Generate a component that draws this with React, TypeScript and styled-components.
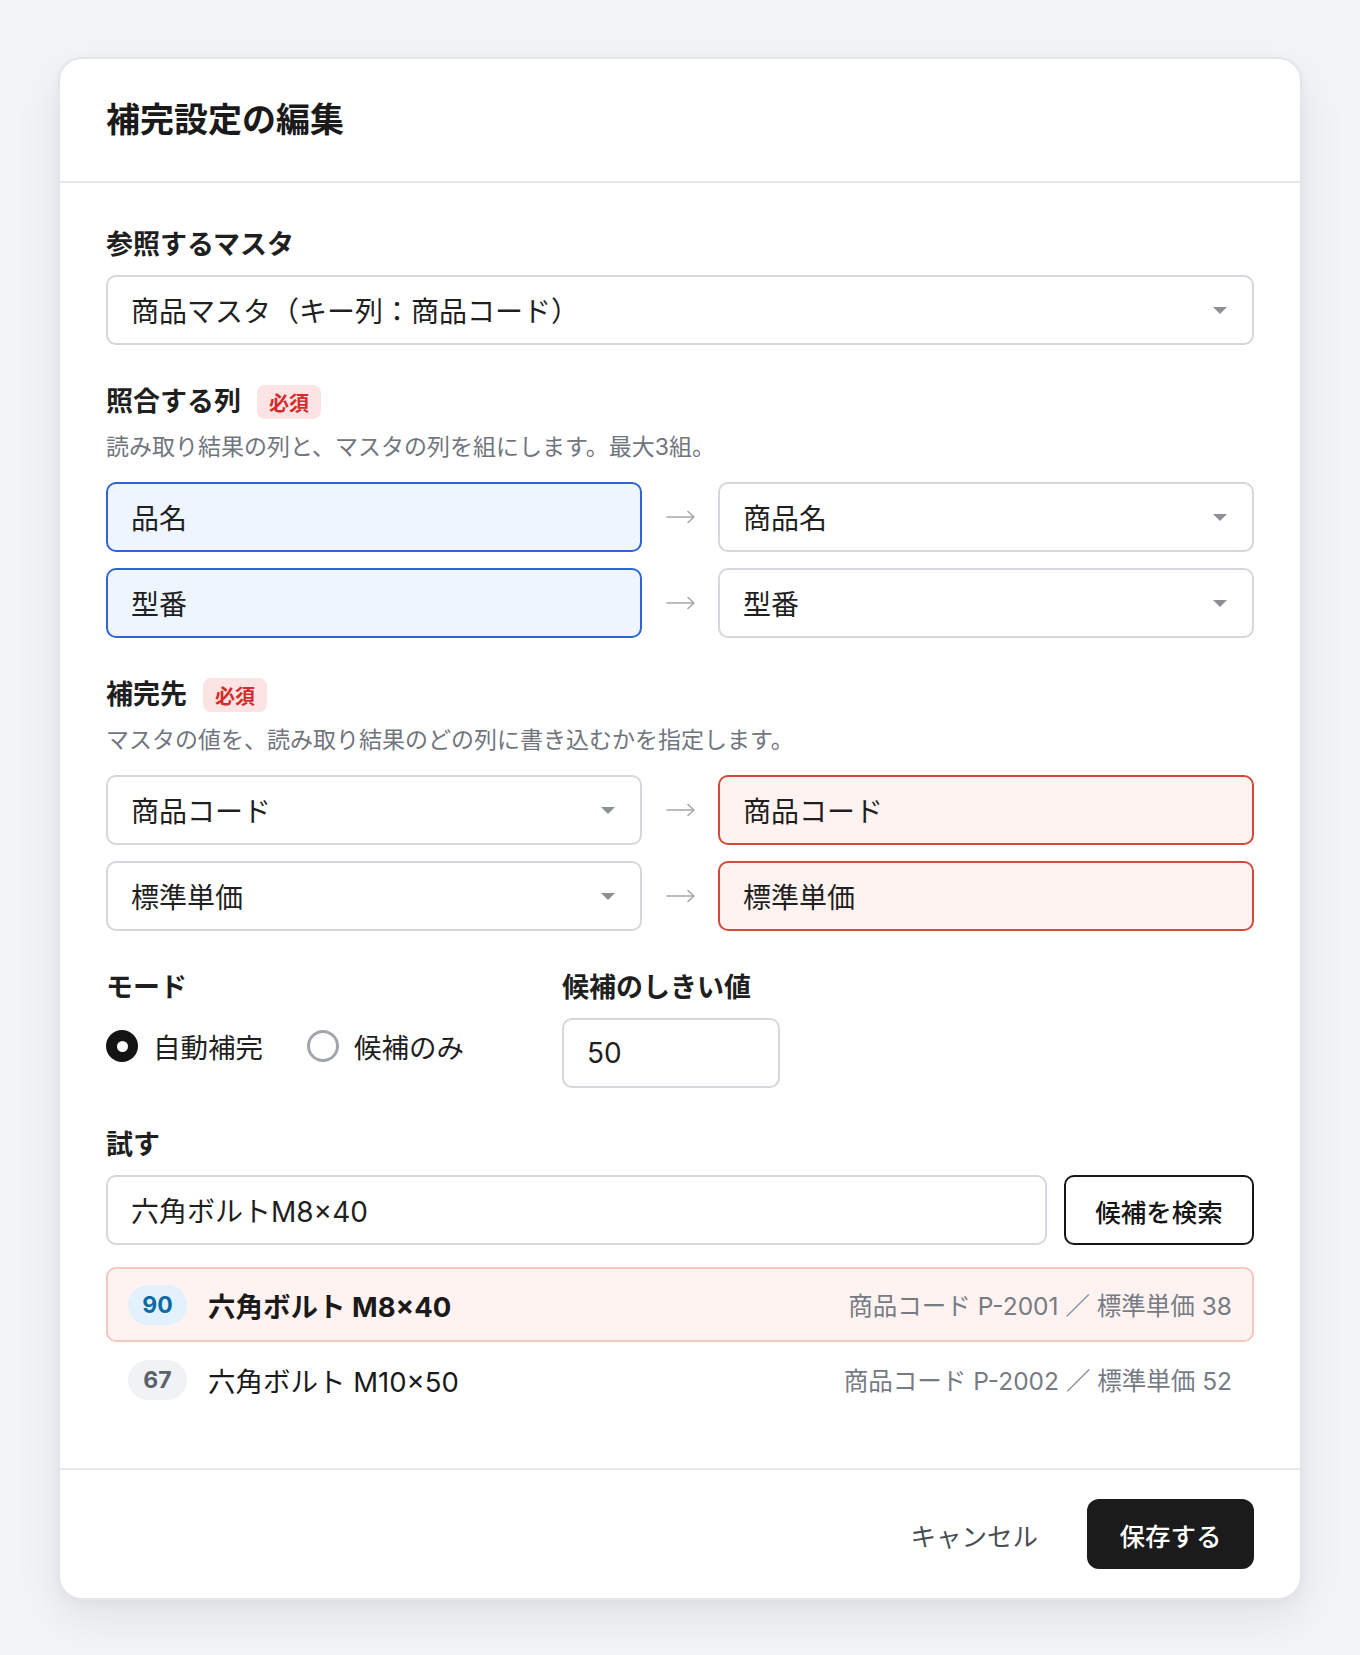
import React from 'react';
import styled, { createGlobalStyle, css } from 'styled-components';

const GlobalStyle = createGlobalStyle`
  * { box-sizing: border-box; }
  body {
    margin: 0;
    background: #f3f4f6;
    font-family: Inter, "Noto Sans CJK JP", "Noto Sans", sans-serif;
    color: #1f1f1f;
  }
`;

const Page = styled.div`
  padding: 57px 58px 59px;
`;

const Dialog = styled.div`
  width: 1244px;
  background: #fff;
  border: 2px solid #e3e5e9;
  border-radius: 24px;
  box-shadow: 0 18px 48px rgba(17, 24, 39, 0.08), 0 4px 12px rgba(17, 24, 39, 0.04);
  overflow: hidden;
`;

const Header = styled.div`
  padding: 42px 46px;
  border-bottom: 2px solid #e5e7eb;
`;

const Title = styled.h1`
  margin: 0;
  font-size: 34px;
  line-height: 38px;
  font-weight: 700;
  color: #1a1a1a;
`;

const Body = styled.div`
  padding: 44px 46px 51px;
  display: flex;
  flex-direction: column;
  gap: 39px;
`;

const Section = styled.div`
  display: flex;
  flex-direction: column;
`;

const LabelRow = styled.div`
  display: flex;
  align-items: center;
  gap: 16px;
  height: 36px;
`;

const Label = styled.div`
  font-size: 27px;
  font-weight: 700;
  color: #1f1f1f;
  line-height: 36px;
`;

const Required = styled.span`
  display: inline-flex;
  align-items: center;
  height: 34px;
  padding: 0 12px;
  border-radius: 8px;
  background: #fde4e4;
  color: #d42b2b;
  font-size: 20px;
  font-weight: 700;
`;

const Hint = styled.div`
  margin-top: 12px;
  font-size: 23px;
  line-height: 30px;
  color: #70757e;
`;

type Tone = 'plain' | 'source' | 'target';

const Field = styled.div<{ $tone?: Tone; $gap?: number }>`
  margin-top: ${(p) => p.$gap ?? 12}px;
  height: 70px;
  display: flex;
  align-items: center;
  justify-content: space-between;
  padding: 0 24px 0 23px;
  border-radius: 10px;
  border: 2px solid #d4d7dc;
  background: #fff;
  font-size: 28px;
  color: #1f1f1f;
  ${(p) =>
    p.$tone === 'source' &&
    css`
      background: #eef5ff;
      border-color: #2f64d6;
    `}
  ${(p) =>
    p.$tone === 'target' &&
    css`
      background: #fff3f1;
      border-color: #d5493a;
    `}
`;

const Caret = styled.span`
  width: 0;
  height: 0;
  border-left: 7px solid transparent;
  border-right: 7px solid transparent;
  border-top: 7px solid #8a8f98;
  margin-right: 1px;
`;

const PairList = styled.div`
  margin-top: 20px;
  display: flex;
  flex-direction: column;
  gap: 16px;
`;

const PairRow = styled.div`
  display: grid;
  grid-template-columns: 1fr 28px 1fr;
  column-gap: 24px;
  align-items: center;

  & > ${Field} {
    margin-top: 0;
  }
`;

const Arrow = () => (
  <svg width="30" height="14" viewBox="0 0 30 14" fill="none">
    <path d="M1 7h27M22 1.5L28 7l-6 5.5" stroke="#a3a8b0" strokeWidth="1.6" strokeLinecap="round" strokeLinejoin="round" />
  </svg>
);

function Select({ value, tone, gap }: { value: string; tone?: Tone; gap?: number }) {
  return (
    <Field $tone={tone} $gap={gap}>
      <span>{value}</span>
      <Caret />
    </Field>
  );
}

const ModeGrid = styled.div`
  display: grid;
  grid-template-columns: 408px 218px;
  column-gap: 48px;
`;

const RadioGroup = styled.div`
  margin-top: 12px;
  height: 56px;
  display: flex;
  align-items: center;
  gap: 44px;
`;

const RadioOption = styled.label`
  display: flex;
  align-items: center;
  gap: 15px;
  font-size: 27.5px;
  color: #1f1f1f;
`;

const RadioDot = styled.span<{ $checked?: boolean }>`
  width: 32px;
  height: 32px;
  border-radius: 50%;
  display: inline-flex;
  align-items: center;
  justify-content: center;
  ${(p) =>
    p.$checked
      ? css`
          background: #141414;
          &::after {
            content: '';
            width: 11px;
            height: 11px;
            border-radius: 50%;
            background: #fff;
          }
        `
      : css`
          border: 3.5px solid #a1a6ae;
        `}
`;

const TryRow = styled.div`
  margin-top: 12px;
  display: grid;
  grid-template-columns: 1fr 190px;
  column-gap: 17px;

  & > ${Field} {
    margin-top: 0;
  }
`;

const OutlineButton = styled.button`
  height: 70px;
  border: 2px solid #161616;
  border-radius: 10px;
  background: #fff;
  font-family: inherit;
  font-size: 25.5px;
  font-weight: 500;
  color: #161616;
`;

const Results = styled.div`
  margin-top: 22px;
  display: flex;
  flex-direction: column;
`;

const ResultRow = styled.div<{ $best?: boolean }>`
  height: 75px;
  display: flex;
  align-items: center;
  padding: 0 20px;
  border-radius: 10px;
  border: 2px solid ${(p) => (p.$best ? '#f5c7bd' : 'transparent')};
  background: ${(p) => (p.$best ? '#fff3f1' : 'transparent')};
`;

const Score = styled.span<{ $best?: boolean }>`
  width: 59px;
  height: 40px;
  border-radius: 20px;
  display: inline-flex;
  align-items: center;
  justify-content: center;
  font-size: 23px;
  font-weight: 700;
  background: ${(p) => (p.$best ? '#e2f1fc' : '#f1f2f4')};
  color: ${(p) => (p.$best ? '#0b6aa6' : '#5b616b')};
`;

const ResultName = styled.span<{ $best?: boolean }>`
  margin-left: 21px;
  font-size: 27.5px;
  font-weight: ${(p) => (p.$best ? 700 : 400)};
  color: #1a1a1a;
  flex: 1;
`;

const ResultMeta = styled.span`
  font-size: 24.5px;
  color: #767b84;
`;

const Footer = styled.div`
  border-top: 2px solid #e5e7eb;
  padding: 29px 46px 29px;
  display: flex;
  justify-content: flex-end;
  align-items: center;
  gap: 49px;
`;

const TextButton = styled.button`
  border: none;
  background: none;
  padding: 0;
  font-family: inherit;
  font-size: 25.5px;
  color: #4a4e55;
`;

const PrimaryButton = styled.button`
  width: 167px;
  height: 70px;
  border: none;
  border-radius: 12px;
  background: #1b1b1b;
  color: #fff;
  font-family: inherit;
  font-size: 25.5px;
  font-weight: 500;
`;

const lookupPairs = [
  { from: '品名', to: '商品名' },
  { from: '型番', to: '型番' },
];

const fillPairs = [
  { from: '商品コード', to: '商品コード' },
  { from: '標準単価', to: '標準単価' },
];

const candidates = [
  { score: 90, name: '六角ボルト M8×40', meta: '商品コード P-2001 ／ 標準単価 38', best: true },
  { score: 67, name: '六角ボルト M10×50', meta: '商品コード P-2002 ／ 標準単価 52', best: false },
];

export default function App() {
  return (
    <Page>
      <GlobalStyle />
      <Dialog>
        <Header>
          <Title>補完設定の編集</Title>
        </Header>
        <Body>
          <Section>
            <LabelRow>
              <Label>参照するマスタ</Label>
            </LabelRow>
            <Select value="商品マスタ（キー列：商品コード）" />
          </Section>

          <Section>
            <LabelRow>
              <Label>照合する列</Label>
              <Required>必須</Required>
            </LabelRow>
            <Hint>読み取り結果の列と、マスタの列を組にします。最大3組。</Hint>
            <PairList>
              {lookupPairs.map((p) => (
                <PairRow key={p.from}>
                  <Field $tone="source">{p.from}</Field>
                  <Arrow />
                  <Select value={p.to} gap={0} />
                </PairRow>
              ))}
            </PairList>
          </Section>

          <Section>
            <LabelRow>
              <Label>補完先</Label>
              <Required>必須</Required>
            </LabelRow>
            <Hint>マスタの値を、読み取り結果のどの列に書き込むかを指定します。</Hint>
            <PairList>
              {fillPairs.map((p) => (
                <PairRow key={p.from}>
                  <Select value={p.from} gap={0} />
                  <Arrow />
                  <Field $tone="target">{p.to}</Field>
                </PairRow>
              ))}
            </PairList>
          </Section>

          <ModeGrid>
            <Section>
              <LabelRow>
                <Label>モード</Label>
              </LabelRow>
              <RadioGroup>
                <RadioOption>
                  <RadioDot $checked />
                  自動補完
                </RadioOption>
                <RadioOption>
                  <RadioDot />
                  候補のみ
                </RadioOption>
              </RadioGroup>
            </Section>
            <Section>
              <LabelRow>
                <Label>候補のしきい値</Label>
              </LabelRow>
              <Field>50</Field>
            </Section>
          </ModeGrid>

          <Section>
            <LabelRow>
              <Label>試す</Label>
            </LabelRow>
            <TryRow>
              <Field>六角ボルトM8×40</Field>
              <OutlineButton type="button">候補を検索</OutlineButton>
            </TryRow>
            <Results>
              {candidates.map((c) => (
                <ResultRow key={c.score} $best={c.best}>
                  <Score $best={c.best}>{c.score}</Score>
                  <ResultName $best={c.best}>{c.name}</ResultName>
                  <ResultMeta>{c.meta}</ResultMeta>
                </ResultRow>
              ))}
            </Results>
          </Section>
        </Body>
        <Footer>
          <TextButton type="button">キャンセル</TextButton>
          <PrimaryButton type="button">保存する</PrimaryButton>
        </Footer>
      </Dialog>
    </Page>
  );
}
